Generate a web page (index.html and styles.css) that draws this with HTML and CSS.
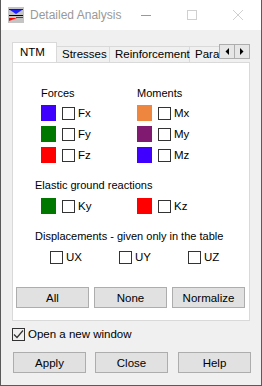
FILE: index.html
```html
<!DOCTYPE html>
<html lang="en">
<head>
  <meta charset="UTF-8" />
  <title>Detailed Analysis</title>
  <link rel="stylesheet" href="styles.css">
</head>
<body>
  <div class="window">
    <div class="titlebar">
      <svg class="app-icon" width="16" height="16" viewBox="0 0 16 16">
        <rect width="16" height="16" fill="#c4c4c4"/>
        <rect x="1" y="2" width="14" height="1" fill="#202040"/>
        <polygon points="2,3 14,3 8,7" fill="#2020ff"/>
        <rect x="1" y="8" width="14" height="1" fill="#000"/>
        <polygon points="1,14 1,11 9,11" fill="#ff0000"/>
        <rect x="8" y="10" width="7" height="1" fill="#ff0000"/>
      </svg>
      <span class="title">Detailed Analysis</span>
      <div class="caption-btns">
        <div class="cap-btn">
          <svg width="12" height="12" viewBox="0 0 12 12"><rect x="1" y="6" width="10" height="1" fill="#999"/></svg>
        </div>
        <div class="cap-btn">
          <svg width="12" height="12" viewBox="0 0 12 12"><rect x="1.5" y="1.5" width="9" height="9" fill="none" stroke="#d0d0d0"/></svg>
        </div>
        <div class="cap-btn">
          <svg width="12" height="12" viewBox="0 0 12 12"><path d="M1 1 L11 11 M11 1 L1 11" stroke="#d0d0d0" stroke-width="1"/></svg>
        </div>
      </div>
    </div>

    <div class="client">
      <div class="tabbar">
        <div class="tabs">
          <div class="tab active">NTM</div>
          <div class="tab">Stresses</div>
          <div class="tab">Reinforcement</div>
          <div class="tab">Para</div>
        </div>
        <div class="scroller">
          <div class="scroll-btn">
            <svg width="4" height="7" viewBox="0 0 4 7"><polygon points="4,0 4,7 0.5,3.5" fill="#000"/></svg>
          </div>
          <div class="scroll-btn">
            <svg width="4" height="7" viewBox="0 0 4 7"><polygon points="0,0 0,7 3.5,3.5" fill="#000"/></svg>
          </div>
        </div>
      </div>

      <div class="panel">
        <div class="groups">
          <div class="col">
            <div class="caption">Forces</div>
            <div class="rows">
              <div class="row"><span class="swatch blue"></span><span class="check"></span><span class="lbl">Fx</span></div>
              <div class="row"><span class="swatch green"></span><span class="check"></span><span class="lbl">Fy</span></div>
              <div class="row"><span class="swatch red"></span><span class="check"></span><span class="lbl">Fz</span></div>
            </div>
          </div>
          <div class="col">
            <div class="caption">Moments</div>
            <div class="rows">
              <div class="row"><span class="swatch orange"></span><span class="check"></span><span class="lbl">Mx</span></div>
              <div class="row"><span class="swatch purple"></span><span class="check"></span><span class="lbl">My</span></div>
              <div class="row"><span class="swatch blue"></span><span class="check"></span><span class="lbl">Mz</span></div>
            </div>
          </div>
        </div>

        <div class="heading">Elastic ground reactions</div>
        <div class="pair">
          <div class="row"><span class="swatch green"></span><span class="check"></span><span class="lbl">Ky</span></div>
          <div class="row"><span class="swatch red"></span><span class="check"></span><span class="lbl">Kz</span></div>
        </div>

        <div class="heading">Displacements - given only in the table</div>
        <div class="disp">
          <div class="row"><span class="check"></span><span class="lbl">UX</span></div>
          <div class="row"><span class="check"></span><span class="lbl">UY</span></div>
          <div class="row"><span class="check"></span><span class="lbl">UZ</span></div>
        </div>

        <div class="panel-btns">
          <button class="btn">All</button>
          <button class="btn">None</button>
          <button class="btn">Normalize</button>
        </div>
      </div>

      <div class="new-window">
        <span class="check checked">
          <svg width="11" height="11" viewBox="0 0 11 11"><path d="M1 5.5 L4 8.5 L10 1.5" fill="none" stroke="#333" stroke-width="1.2"/></svg>
        </span>
        <span class="lbl">Open a new window</span>
      </div>

      <div class="dialog-btns">
        <button class="btn">Apply</button>
        <button class="btn">Close</button>
        <button class="btn">Help</button>
      </div>
    </div>
  </div>
</body>
</html>
```

FILE: styles.css
```css
body {
  margin: 0;
  padding: 0;
  font-family: 'Liberation Sans', Arial, sans-serif;
  font-size: 11px;
  color: #000;
  background-color: #f0f0f0;
}
.window {
  width: 262px;
  height: 386px;
  box-sizing: border-box;
  border: 1px solid #5a5a5a;
  border-top: none;
  background-color: #f0f0f0;
  overflow: hidden;
}
.titlebar {
  height: 30px;
  background-color: #fff;
  display: flex;
  align-items: center;
}
.app-icon {
  margin-left: 7px;
  flex: none;
}
.title {
  margin-left: 6px;
  color: #999;
  font-size: 12px;
}
.caption-btns {
  margin-left: auto;
  display: flex;
}
.cap-btn {
  width: 46px;
  height: 30px;
  display: flex;
  align-items: center;
  justify-content: center;
}
.client {
  padding: 12px 0 0 11px;
}
.tabbar {
  display: flex;
  height: 20px;
}
.tabs {
  display: flex;
  align-items: flex-end;
  width: 207px;
  overflow: hidden;
  flex: none;
}
.tab {
  flex: none;
  height: 16px;
  box-sizing: border-box;
  border: 1px solid #d9d9d9;
  border-bottom: none;
  border-left: none;
  background-color: #f0f0f0;
  padding: 0 0 0 5px;
  line-height: 15px;
  color: #000;
  font-size: 11.5px;
}
.tab.active {
  height: 21px;
  margin-bottom: -1px;
  width: 45px;
  border-left: 1px solid #d9d9d9;
  background-color: #fff;
  position: relative;
  z-index: 1;
  padding: 2px 0 0 7px;
}
.tab:nth-child(2) { width: 53px; }
.tab:nth-child(3) { width: 80px; }
.tab:nth-child(4) { width: 29px; border-right: none; }
.scroller {
  display: flex;
  margin-top: 2px;
}
.scroll-btn {
  width: 16px;
  height: 15px;
  box-sizing: border-box;
  border: 1px solid #adadad;
  background-color: #e6e6e6;
  display: flex;
  align-items: center;
  justify-content: center;
}
.scroll-btn + .scroll-btn {
  border-left: none;
  width: 15px;
}
.panel {
  width: 238px;
  height: 259px;
  box-sizing: border-box;
  border: 1px solid #d9d9d9;
  background-color: #fff;
}
.groups {
  display: grid;
  grid-template-columns: 96px 1fr;
  padding: 23px 0 0 28px;
}
.caption,
.heading {
  line-height: 15px;
}
.rows {
  display: flex;
  flex-direction: column;
  gap: 5px;
  margin-top: 4px;
}
.row {
  display: flex;
  align-items: center;
  height: 16px;
}
.swatch {
  width: 15px;
  height: 16px;
  margin-right: 6px;
  flex: none;
}
.blue { background-color: #4000ff; }
.green { background-color: #007800; }
.red { background-color: #ff0000; }
.orange { background-color: #ee8640; }
.purple { background-color: #801a70; }
.check {
  width: 13px;
  height: 13px;
  box-sizing: border-box;
  border: 1px solid #333;
  background-color: #fff;
  flex: none;
  display: flex;
  align-items: center;
  justify-content: center;
}
.lbl {
  margin-left: 3px;
  line-height: 15px;
  font-size: 11.5px;
}
.heading {
  margin: 15px 0 0 22px;
}
.pair {
  display: grid;
  grid-template-columns: 96px 1fr;
  padding-left: 28px;
  margin-top: 5px;
}
.disp {
  display: grid;
  grid-template-columns: 69px 69px 1fr;
  padding-left: 37px;
  margin-top: 7px;
}
.disp .row {
  height: 13px;
}
.panel-btns {
  display: flex;
  gap: 5px;
  margin: 23px 0 0 3px;
}
.btn {
  width: 73px;
  height: 21px;
  box-sizing: border-box;
  border: 1px solid #adadad;
  background-color: #e1e1e1;
  font-family: 'Liberation Sans', Arial, sans-serif;
  font-size: 11.5px;
  color: #000;
  padding: 0;
}
.new-window {
  display: flex;
  align-items: center;
  margin-top: 7px;
  height: 13px;
}
.new-window .check {
  background-color: #f0f0f0;
}
.dialog-btns {
  display: flex;
  margin: 11px 0 0 1px;
}
.dialog-btns .btn:nth-child(2) {
  margin-left: 9px;
}
.dialog-btns .btn:nth-child(3) {
  margin-left: 10px;
}
```
